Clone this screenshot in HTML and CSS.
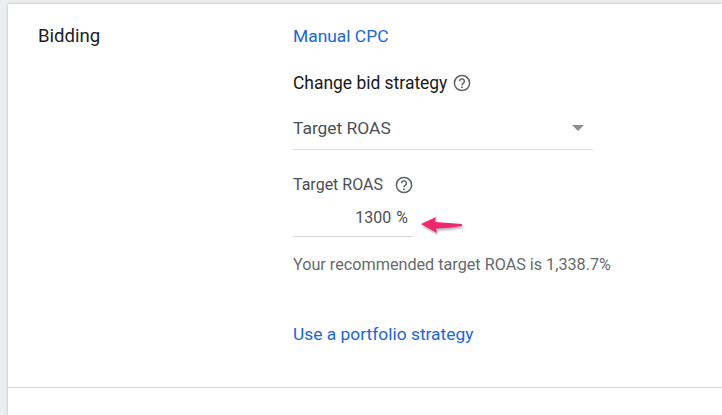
FILE: index.html
```html
<!DOCTYPE html>
<html lang="en">
<head>
<meta charset="utf-8">
<title>Bidding</title>
<link rel="stylesheet" href="styles.css">
</head>
<body>
<main class="card">
  <section class="section">
    <h2 class="section-title">Bidding</h2>
    <div class="section-body">
      <a class="link current" href="#">Manual CPC</a>
      <div class="strategy-label">
        <span>Change bid strategy</span>
        <svg class="help" viewBox="0 0 18 18"><circle cx="9" cy="9" r="7.6"/><path d="M6.6 7.2a2.4 2.4 0 1 1 3.8 2c-.9.6-1.4 1-1.4 2"/><circle class="dot" cx="9" cy="13.2" r=".95"/></svg>
      </div>
      <div class="select">
        <span>Target ROAS</span>
        <span class="caret"></span>
      </div>
      <div class="roas-label">
        <span>Target ROAS</span>
        <svg class="help" viewBox="0 0 18 18"><circle cx="9" cy="9" r="7.6"/><path d="M6.6 7.2a2.4 2.4 0 1 1 3.8 2c-.9.6-1.4 1-1.4 2"/><circle class="dot" cx="9" cy="13.2" r=".95"/></svg>
      </div>
      <div class="roas-row">
        <div class="roas-input">1300 <span class="pct">%</span></div>
        <svg class="arrow" viewBox="0 0 44 24"><path d="M1 11 L16 4 L15 9 Q30 10 42 11 L42 13 Q30 15 16 15.5 L17 20 Z"/></svg>
      </div>
      <p class="hint">Your recommended target ROAS is 1,338.7%</p>
      <a class="link portfolio" href="#">Use a portfolio strategy</a>
    </div>
  </section>
</main>
</body>
</html>
```
FILE: styles.css
```css
html, body {
  margin: 0;
  height: 100%;
}
body {
  width: 722px;
  height: 415px;
  overflow: hidden;
  background: #eceef0;
  padding: 4px 0 0 8px;
  box-sizing: border-box;
  font-family: Roboto, "Liberation Sans", sans-serif;
}
.card {
  background: #fff;
  height: 411px;
  box-shadow: 0 0 3px rgba(0, 0, 0, .22);
}
.section {
  display: flex;
  height: 384px;
  box-sizing: border-box;
  border-bottom: 1px solid #dcdcdc;
  padding: 21px 0 0 30px;
}
.section-title {
  width: 255px;
  margin: 1px 0 0;
  font-size: 18.6px;
  font-weight: 400;
  line-height: 20px;
  color: #202124;
}
.section-body {
  display: flex;
  flex-direction: column;
  align-items: flex-start;
}
.link {
  color: #1a67d2;
  text-decoration: none;
  font-size: 17.4px;
  line-height: 24px;
}
.current {
  margin-top: -1px;
}
.strategy-label {
  display: flex;
  align-items: center;
  gap: 6px;
  margin-top: 23px;
  font-size: 17.45px;
  line-height: 24px;
  color: #16181a;
}
.help {
  width: 18px;
  height: 18px;
  fill: none;
  stroke: #5f6368;
  stroke-width: 1.5;
}
.help .dot {
  fill: #5f6368;
  stroke: none;
}
.select {
  display: flex;
  justify-content: space-between;
  align-items: center;
  width: 300px;
  height: 43px;
  box-sizing: border-box;
  margin-top: 12px;
  padding: 0 9px 0 0;
  border-bottom: 1px solid #dadce0;
  font-size: 17.4px;
  color: #4b4f54;
}
.caret {
  width: 0;
  height: 0;
  border-left: 6px solid transparent;
  border-right: 6px solid transparent;
  border-top: 6px solid #8b8d90;
}
.roas-label {
  display: flex;
  align-items: center;
  gap: 12px;
  margin-top: 23px;
  font-size: 16px;
  line-height: 24px;
  color: #4b4f54;
}
.roas-row {
  display: flex;
  align-items: center;
  gap: 7px;
}
.roas-input {
  width: 120px;
  height: 40px;
  box-sizing: border-box;
  padding: 9px 5px 0 0;
  border-bottom: 1px solid #dadce0;
  text-align: right;
  font-size: 16px;
  line-height: 24px;
  color: #4b4f54;
}
.pct {
  margin-left: 1px;
  font-size: 16px;
}
.arrow {
  width: 44px;
  height: 24px;
  margin-top: 16px;
  fill: #f0266f;
  filter: drop-shadow(1px 2px 1px rgba(0, 0, 0, .3));
}
.hint {
  margin: 18px 0 0;
  font-size: 16.2px;
  line-height: 20px;
  color: #666a6e;
}
.portfolio {
  margin-top: 47px;
}
```
